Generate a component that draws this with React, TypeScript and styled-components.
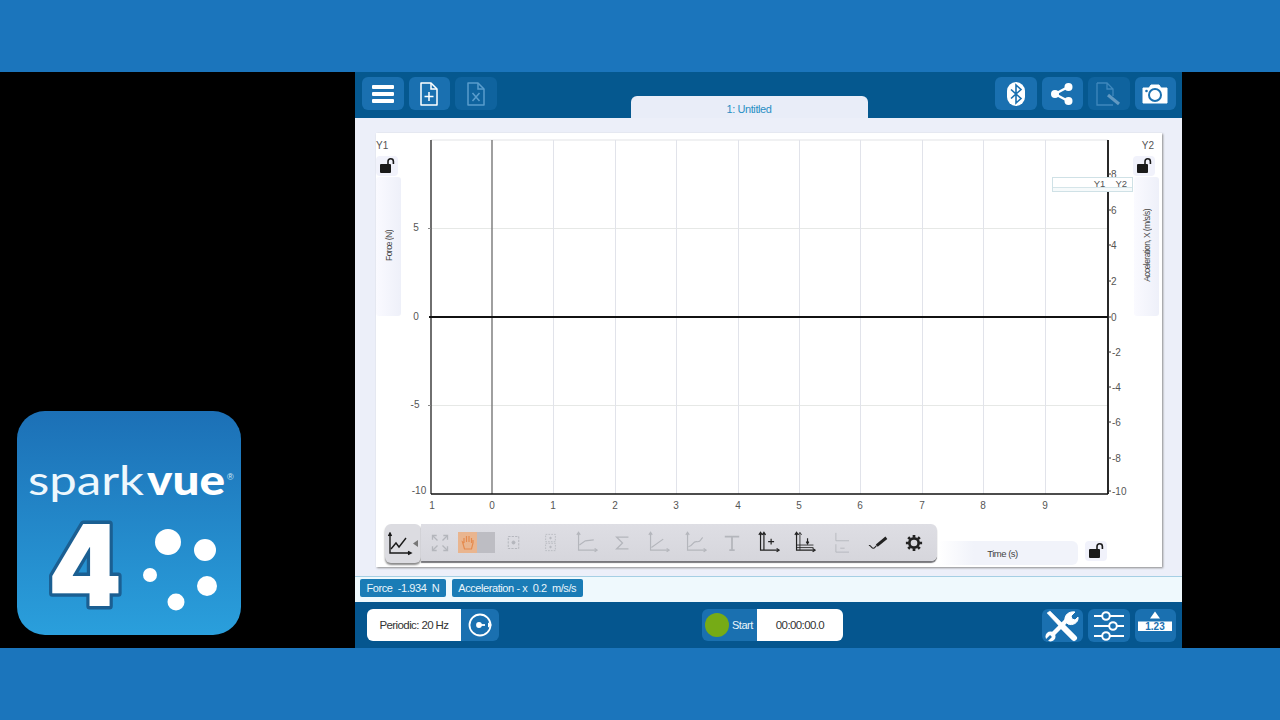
import React from 'react';
import styled, { createGlobalStyle } from 'styled-components';

const GlobalStyle = createGlobalStyle`
  html, body { margin: 0; padding: 0; background: #1b75bc; }
  body { font-family: "Liberation Sans", Arial, sans-serif; }
`;

const Page = styled.div`
  width: 1280px;
  height: 720px;
  display: flex;
  flex-direction: column;
  overflow: hidden;
`;

const Band = styled.div`
  height: 72px;
  background: #1b75bc;
`;

const Middle = styled.div`
  height: 576px;
  display: flex;
  background: #000;
`;

const LogoColumn = styled.div`
  width: 355px;
  display: flex;
  align-items: flex-end;
  padding: 0 0 13px 17px;
  box-sizing: border-box;
`;

const AppWindow = styled.div`
  width: 827px;
  display: flex;
  flex-direction: column;
  background: #eceff9;
`;

const TopBar = styled.div`
  height: 46px;
  flex: none;
  display: flex;
  align-items: flex-start;
  padding: 5px 6px 0 7px;
  box-sizing: border-box;
  background: #05588f;
`;

const ButtonGroup = styled.div<{ $right?: boolean }>`
  display: flex;
  gap: 5px;
  margin-left: ${(p) => (p.$right ? 'auto' : '0')};
`;

const IconButton = styled.div<{ $disabled?: boolean }>`
  width: 41.5px;
  height: 33px;
  display: flex;
  align-items: center;
  justify-content: center;
  border-radius: 6px;
  background: ${(p) => (p.$disabled ? '#0f639e' : '#1a70b0')};
`;

const Tab = styled.div`
  align-self: flex-end;
  width: 237px;
  height: 22px;
  margin-left: 134px;
  padding-top: 4px;
  box-sizing: border-box;
  display: flex;
  align-items: center;
  justify-content: center;
  border-radius: 6px 6px 0 0;
  background: #e9edf8;
  color: #2a8fc4;
  font-size: 11px;
  letter-spacing: -0.4px;
`;

const Workspace = styled.div`
  flex: 1;
  padding: 15px 20px 9px 21px;
  min-height: 0;
`;

const GraphCard = styled.div`
  position: relative;
  height: 434px;
  display: grid;
  grid-template-columns: 28px 730px 28px;
  grid-template-rows: 388px 46px;
  background: #fff;
  box-shadow: 1px 1px 2px #8c8c8c;
`;

const Rail = styled.div<{ $right?: boolean }>`
  display: flex;
  flex-direction: column;
  align-items: ${(p) => (p.$right ? 'flex-end' : 'flex-start')};
  padding: 7px ${(p) => (p.$right ? '7px' : '0')} 0 0;
  color: #555;
  font-size: 10px;
`;

const RailTitle = styled.div<{ $right?: boolean }>`
  height: 12px;
  line-height: 12px;
  margin-right: ${(p) => (p.$right ? '1px' : '0')};
  margin-bottom: 4px;
`;

const LockBox = styled.div`
  width: 22px;
  height: 20px;
  display: flex;
  align-items: center;
  justify-content: center;
  border-radius: 4px;
  background: #f1f2fb;
`;

const AxisPanel = styled.div<{ $right?: boolean }>`
  width: 25px;
  height: 139px;
  margin-top: 1px;
  margin-right: ${(p) => (p.$right ? '-4px' : '0')};
  display: flex;
  align-items: center;
  justify-content: center;
  border-radius: 3px;
  background: linear-gradient(90deg, #fafaff, #eef0f9);
`;

const VerticalText = styled.span`
  writing-mode: vertical-rl;
  transform: rotate(180deg);
  margin-bottom: 2px;
  font-size: 8.5px;
  letter-spacing: -0.55px;
  color: #444;
  white-space: nowrap;
`;

const PlotSvg = styled.svg`
  display: block;
  width: 730px;
  height: 388px;
  font-family: "Liberation Sans", Arial, sans-serif;
  font-size: 10px;
`;

const XAxisRow = styled.div`
  grid-column: 1 / -1;
  display: flex;
  align-items: flex-start;
  justify-content: flex-end;
  padding: 20px 55px 0 0;
  gap: 7px;
`;

const XAxisPanel = styled.div`
  width: 139px;
  height: 24px;
  display: flex;
  align-items: center;
  justify-content: center;
  padding-right: 12px;
  box-sizing: border-box;
  border-radius: 0 6px 6px 0;
  background: linear-gradient(90deg, #fff, #f1f3fa 25%);
  color: #444;
  font-size: 9.5px;
  letter-spacing: -0.5px;
`;

const LegendBox = styled.div`
  position: absolute;
  left: 676px;
  top: 44px;
  width: 81px;
  height: 15px;
  display: flex;
  justify-content: flex-end;
  gap: 10px;
  padding: 0 5px 3px 0;
  box-sizing: border-box;
  border: 1px solid #cfe1e6;
  background: #fff;
  box-shadow: inset 0 -3px 0 #f6fafb, inset 0 -4px 0 #d5e5e9;
  color: #555;
  font-size: 9.5px;
  line-height: 12px;
`;

const ToolbarWrap = styled.div`
  position: absolute;
  left: 9px;
  top: 391px;
  display: flex;
  align-items: flex-start;
`;

const ToolbarMode = styled.div`
  width: 36px;
  height: 39px;
  display: flex;
  align-items: center;
  justify-content: center;
  box-sizing: border-box;
  border-radius: 6px;
  background: #dcdce1;
  box-shadow: 0 2px 2px #8a8a8a;
`;

const ToolbarBar = styled.div`
  width: 516px;
  height: 37px;
  display: flex;
  align-items: center;
  padding-left: 1px;
  box-sizing: border-box;
  border-radius: 0 6px 6px 0;
  background: linear-gradient(180deg, #dedee4, #d6d6dc);
  box-shadow: 0 2px 1px #77777c;
`;

const ToolSlot = styled.div`
  width: 36.45px;
  height: 26px;
  flex: none;
  display: flex;
  align-items: center;
  justify-content: center;
`;

const HandPair = styled.div`
  width: 37px;
  height: 21px;
  flex: none;
  display: flex;
`;

const HandPart = styled.div<{ $on?: boolean }>`
  flex: 1;
  display: flex;
  align-items: center;
  justify-content: center;
  background: ${(p) => (p.$on ? '#e9b58f' : '#bdbdc3')};
`;

const MeterRow = styled.div`
  height: 26px;
  flex: none;
  display: flex;
  align-items: center;
  gap: 6px;
  padding: 0 0 3px 5px;
  box-sizing: border-box;
  border-top: 1px solid #a5cfe4;
  background: #eff9fd;
`;

const MeterChip = styled.div`
  height: 18px;
  display: flex;
  align-items: center;
  padding: 0 6.5px;
  border-radius: 2px;
  background: #1a7cb6;
  color: #e9f5fb;
  font-size: 11px;
  letter-spacing: -0.42px;
  white-space: pre;
`;

const BottomBar = styled.div`
  height: 46px;
  flex: none;
  display: flex;
  align-items: flex-start;
  padding: 7px 6px 0 12px;
  box-sizing: border-box;
  background: #05568f;
`;

const RateField = styled.div`
  width: 94px;
  height: 32px;
  display: flex;
  align-items: center;
  justify-content: center;
  border-radius: 6px 0 0 6px;
  background: #fff;
  color: #333;
  font-size: 11.5px;
  letter-spacing: -0.6px;
`;

const RateButton = styled.div`
  width: 38px;
  height: 32px;
  display: flex;
  align-items: center;
  justify-content: center;
  border-radius: 0 6px 6px 0;
  background: #1a70b0;
`;

const StartGroup = styled.div`
  margin-left: 203px;
  display: flex;
`;

const StartButton = styled.div`
  width: 55px;
  height: 32px;
  display: flex;
  align-items: center;
  gap: 3px;
  padding-left: 3px;
  box-sizing: border-box;
  border-radius: 6px 0 0 6px;
  background: #1a70b0;
  color: #eaf5fb;
  font-size: 11px;
  letter-spacing: -0.5px;
`;

const GreenDot = styled.div`
  width: 24px;
  height: 24px;
  border-radius: 50%;
  background: #76ab16;
`;

const Timer = styled.div`
  width: 86px;
  height: 32px;
  display: flex;
  align-items: center;
  justify-content: center;
  border-radius: 0 6px 6px 0;
  background: #fff;
  color: #333;
  font-size: 11.5px;
  letter-spacing: -0.6px;
`;

const SparkLogo = () => (
  <svg width="224" height="224" viewBox="17 411 224 224">
    <defs>
      <linearGradient id="logoFill" x1="0" y1="0" x2="0" y2="1">
        <stop offset="0" stopColor="#1c70b6" />
        <stop offset="1" stopColor="#2a9fdc" />
      </linearGradient>
    </defs>
    <rect x="17" y="411" width="224" height="224" rx="28" fill="url(#logoFill)" />
    <text x="28" y="495" fill="#eef8fd" fontFamily="Lato, sans-serif" fontWeight="400" fontSize="40" textLength="116" lengthAdjust="spacingAndGlyphs">spark</text>
    <text x="147" y="495" fill="#fff" fontFamily="Lato, sans-serif" fontWeight="900" fontSize="41" textLength="78" lengthAdjust="spacingAndGlyphs">vue</text>
    <text x="227" y="480" fill="#d5ecf8" fontFamily="Liberation Sans, sans-serif" fontSize="9">®</text>
    <text x="48" y="606" fill="#fff" stroke="#1b5f92" strokeWidth="7" strokeLinejoin="round" paintOrder="stroke" fontFamily="Inter, sans-serif" fontWeight="900" fontSize="113" textLength="74" lengthAdjust="spacingAndGlyphs">4</text>
    <circle cx="168" cy="542" r="13" fill="#fff" />
    <circle cx="205" cy="550" r="11" fill="#fff" />
    <circle cx="150" cy="575" r="7" fill="#fff" />
    <circle cx="207" cy="586" r="10" fill="#fff" />
    <circle cx="176" cy="602" r="8.5" fill="#fff" />
  </svg>
);

const MenuIcon = () => (
  <svg width="24" height="20" viewBox="0 0 24 20" fill="#fff">
    <rect x="1" y="1" width="22" height="4" rx="1" />
    <rect x="1" y="8" width="22" height="4" rx="1" />
    <rect x="1" y="15" width="22" height="4" rx="1" />
  </svg>
);

const FileIcon = ({ color, children }: { color: string; children: React.ReactNode }) => (
  <svg width="20" height="26" viewBox="0 0 20 26" fill="none" stroke={color} strokeWidth="1.5">
    <path d="M2 2h10l6 6v16H2z" strokeLinejoin="round" />
    <path d="M12 2v6h6" />
    {children}
  </svg>
);

const BluetoothIcon = () => (
  <svg width="20" height="26" viewBox="0 0 20 26">
    <rect x="1" y="1" width="18" height="24" rx="9" fill="#fff" />
    <path d="M5 8.5l10 9-5 4.5V4l5 4.5-10 9" fill="none" stroke="#1a70b0" strokeWidth="1.6" />
  </svg>
);

const ShareIcon = () => (
  <svg width="24" height="24" viewBox="0 0 24 24" fill="#fff">
    <path d="M18 5L5 12l13 7" fill="none" stroke="#fff" strokeWidth="2.4" />
    <circle cx="18.5" cy="5" r="4" />
    <circle cx="5" cy="12" r="4" />
    <circle cx="18.5" cy="19" r="4" />
  </svg>
);

const DocPenIcon = () => (
  <svg width="28" height="26" viewBox="0 0 28 26" fill="none">
    <path d="M2 2h10l6 6v7M18 24H2V2M12 2v6h6" stroke="#3f88bd" strokeWidth="1.3" />
    <path d="M13 14l11 9" stroke="#6199c2" strokeWidth="3.2" />
  </svg>
);

const CameraIcon = () => (
  <svg width="26" height="22" viewBox="0 0 26 22">
    <path d="M1 5h6l2-3h8l2 3h6v15H1z" fill="#fff" stroke="#fff" strokeLinejoin="round" />
    <circle cx="13" cy="12" r="6" fill="none" stroke="#1a70b0" strokeWidth="2" />
    <circle cx="4.5" cy="8" r="1.3" fill="#1a70b0" />
  </svg>
);

const ToolsIcon = () => (
  <svg width="34" height="32" viewBox="0 0 34 32" fill="none" stroke="#fff">
    <path d="M2 3l3-2 13 13-3 3z" fill="#fff" strokeWidth="0.5" />
    <path d="M17 16l12 12" strokeWidth="6" strokeLinecap="round" />
    <path d="M6 26L23 9" strokeWidth="4.5" />
    <path d="M20 11c-1-6 4-10 10-9l-4 4 1 3 3 1 3-3c1 6-6 9-10 7z" fill="#fff" strokeWidth="1" />
    <circle cx="5.5" cy="26.5" r="5" fill="#fff" strokeWidth="0" />
    <path d="M1 31l5-5" stroke="#1a70b0" strokeWidth="2.6" />
  </svg>
);

const SlidersIcon = () => (
  <svg width="32" height="30" viewBox="0 0 32 30" fill="none" stroke="#fff" strokeWidth="2">
    <path d="M1 5h30M1 15h30M1 25h30" />
    <circle cx="13" cy="5" r="3.8" fill="#1a70b0" />
    <circle cx="20" cy="15" r="3.8" fill="#1a70b0" />
    <circle cx="13" cy="25" r="3.8" fill="#1a70b0" />
  </svg>
);

const DigitsIcon = () => (
  <svg width="36" height="30" viewBox="0 0 36 30">
    <path d="M18 0.5l5 7H13z" fill="#fff" />
    <rect x="1" y="10.5" width="34" height="9.5" fill="#fff" />
    <text x="18" y="19" textAnchor="middle" fontSize="10" fontWeight="700" fill="#1a70b0" fontFamily="Liberation Sans, sans-serif">1.23</text>
  </svg>
);

const RateIcon = () => (
  <svg width="26" height="26" viewBox="0 0 26 26" fill="none" stroke="#fff" strokeWidth="1.8">
    <circle cx="13" cy="13" r="10.5" />
    <circle cx="12" cy="13" r="2" fill="#fff" />
    <path d="M12 13h6" />
    <path d="M21 10.5l4 2.5-4 2.5z" fill="#fff" strokeWidth="0" />
  </svg>
);

const LockIcon = () => (
  <svg width="17" height="16" viewBox="0 0 17 16">
    <rect x="1" y="6" width="11" height="9" rx="1" fill="#1a1a1a" />
    <path d="M9 6V3.5a2.7 2.7 0 0 1 5.4 0V6" fill="none" stroke="#1a1a1a" strokeWidth="1.6" />
  </svg>
);

const GraphAxes = ({ color, children }: { color: string; children?: React.ReactNode }) => (
  <svg width="22" height="23" viewBox="0 0 26 26" fill="none" stroke={color} strokeWidth="1.4">
    <path d="M3 2v20h21" />
    <path d="M1 4l2-3 2 3M22 20l3 2-3 2" />
    {children}
  </svg>
);

const tool = (c: string) => ({
  expand: (
    <svg width="20" height="20" viewBox="0 0 24 24" fill="none" stroke={c} strokeWidth="1.6">
      <path d="M3 3l6 6M21 3l-6 6M3 21l6-6M21 21l-6-6" />
      <path d="M3 8V3h5M21 8V3h-5M3 16v5h5M21 16v5h-5" />
    </svg>
  ),
  target: (
    <svg width="15" height="15" viewBox="0 0 20 20" fill="none" stroke={c} strokeWidth="1.3">
      <path d="M3 2h14v16H3z" strokeDasharray="3 1.6" />
      <circle cx="10" cy="10" r="2" fill={c} />
    </svg>
  ),
  stack: (
    <svg width="13" height="21" viewBox="0 0 16 24" fill="none" stroke={c} strokeWidth="1">
      <rect x="2" y="2" width="12" height="9" strokeDasharray="2 1.5" />
      <rect x="2" y="13" width="12" height="9" strokeDasharray="2 1.5" />
      <circle cx="8" cy="6.5" r="1" fill={c} />
      <circle cx="8" cy="17.5" r="1" fill={c} />
    </svg>
  ),
  sigma: (
    <svg width="17" height="18" viewBox="0 0 20 20" fill="none" stroke={c} strokeWidth="1.5">
      <path d="M17 3H3l7 7-7 7h14" />
    </svg>
  ),
  gear: (
    <svg width="18" height="18" viewBox="0 0 20 20" fill="none" stroke={c}>
      <circle cx="10" cy="10" r="5.2" strokeWidth="3" />
      <path d="M10 1v3M10 16v3M1 10h3M16 10h3M3.6 3.6l2.1 2.1M14.3 14.3l2.1 2.1M16.4 3.6l-2.1 2.1M5.7 14.3l-2.1 2.1" strokeWidth="3" />
    </svg>
  ),
  pen: (
    <svg width="21" height="16" viewBox="0 0 24 18" fill="none" stroke={c}>
      <path d="M1 12c2-1 3 3 5 3s2-2 4-3" strokeWidth="1.2" />
      <path d="M10 12L21 3" strokeWidth="3.4" />
    </svg>
  ),
});

const on = tool('#222');
const off = tool('#b4b6bc');
const dim = '#b4b6bc';

const ModeIcon = () => (
  <svg width="32" height="24" viewBox="0 0 32 24" fill="none" stroke="#1a1a1a" strokeWidth="1.4">
    <path d="M3 2v19h20" />
    <path d="M1.5 4L3 1l1.5 3M21 19.5l3 1.5-3 1.5" fill="#1a1a1a" />
    <path d="M4 17l5-6 3 4 7-9" />
    <path d="M31 8v7l-5-3.5z" fill="#777" stroke="none" />
  </svg>
);

const xTicks = [
  { x: 553, t: '1' }, { x: 615, t: '2' }, { x: 676, t: '3' }, { x: 738, t: '4' },
  { x: 799, t: '5' }, { x: 860, t: '6' }, { x: 922, t: '7' }, { x: 983, t: '8' }, { x: 1045, t: '9' },
];
const leftTicks = [
  { y: 228, t: '5', x: 416 }, { y: 317, t: '0', x: 416 }, { y: 405, t: '-5', x: 415 }, { y: 491, t: '-10', x: 419 },
];
const rightTicks = [
  { y: 174, t: '8' }, { y: 210, t: '6' }, { y: 245, t: '4' }, { y: 281, t: '2' }, { y: 317, t: '0' },
  { y: 352, t: '-2' }, { y: 387, t: '-4' }, { y: 422, t: '-6' }, { y: 458, t: '-8' }, { y: 491, t: '-10' },
];

const Plot = () => (
  <PlotSvg viewBox="404 133 730 388">
    <path d="M431 140H1108" stroke="#e2e3e6" />
    <path d="M431 228.5H1108M431 405.5H1108" stroke="#e6e8e6" />
    {xTicks.map((k) => (
      <path key={k.t} d={`M${k.x + 0.5} 140V494`} stroke="#e1e3ea" />
    ))}
    <path d="M492 140V494" stroke="#777" strokeWidth="1.4" />
    <path d="M431 140V494" stroke="#333" strokeWidth="1.4" />
    <path d="M431 494H1108" stroke="#111" strokeWidth="1.4" />
    <path d="M1108 140V494" stroke="#111" strokeWidth="1.8" />
    <path d="M429 317H1108" stroke="#111" strokeWidth="2" />
    <path d="M428 228.5h3M428 405.5h3" stroke="#888" />
    {xTicks.map((k) => (
      <text key={k.t} x={k.x} y="509" textAnchor="middle" fill="#555">{k.t}</text>
    ))}
    <text x="432" y="509" textAnchor="middle" fill="#555">1</text>
    <text x="492" y="509" textAnchor="middle" fill="#555">0</text>
    {leftTicks.map((k) => (
      <text key={k.t} x={k.x} y={k.y + 3} textAnchor="middle" fill="#555">{k.t}</text>
    ))}
    {rightTicks.map((k) => (
      <g key={k.t}>
        <path d={`M1108 ${k.y}h3`} stroke="#333" />
        <text x={k.t.length > 1 ? 1112 : 1111} y={k.y + 3.5} fill="#555">{k.t}</text>
      </g>
    ))}
  </PlotSvg>
);

const App: React.FC = () => {
  return (
    <Page>
      <GlobalStyle />
      <Band />
      <Middle>
        <LogoColumn>
          <SparkLogo />
        </LogoColumn>
        <AppWindow>
          <TopBar>
            <ButtonGroup>
              <IconButton><MenuIcon /></IconButton>
              <IconButton>
                <FileIcon color="#fff"><path d="M10 11v9M5.5 15.5h9" /></FileIcon>
              </IconButton>
              <IconButton $disabled>
                <FileIcon color="#5a9dcd"><path d="M6.5 12l7 8M13.5 12l-7 8" /></FileIcon>
              </IconButton>
            </ButtonGroup>
            <Tab>1: Untitled</Tab>
            <ButtonGroup $right>
              <IconButton><BluetoothIcon /></IconButton>
              <IconButton><ShareIcon /></IconButton>
              <IconButton $disabled><DocPenIcon /></IconButton>
              <IconButton><CameraIcon /></IconButton>
            </ButtonGroup>
          </TopBar>
          <Workspace>
            <GraphCard>
              <Rail>
                <RailTitle>Y1</RailTitle>
                <LockBox><LockIcon /></LockBox>
                <AxisPanel><VerticalText>Force (N)</VerticalText></AxisPanel>
              </Rail>
              <Plot />
              <Rail $right>
                <RailTitle $right>Y2</RailTitle>
                <LockBox><LockIcon /></LockBox>
                <AxisPanel $right><VerticalText>Acceleration, X (m/s/s)</VerticalText></AxisPanel>
              </Rail>
              <XAxisRow>
                <XAxisPanel>Time (s)</XAxisPanel>
                <LockBox><LockIcon /></LockBox>
              </XAxisRow>
              <LegendBox><span>Y1</span><span>Y2</span></LegendBox>
              <ToolbarWrap>
                <ToolbarMode><ModeIcon /></ToolbarMode>
                <ToolbarBar>
                  <ToolSlot>{off.expand}</ToolSlot>
                  <HandPair>
                    <HandPart $on>
                      <svg width="14" height="17" viewBox="0 0 14 17" fill="none" stroke="#e58a4e" strokeWidth="1.2">
                        <path d="M3 9V4M5.5 8V2M8 8V2M10.5 9V4M3 9L1.5 8l2 7h7l1.5-6V6" />
                      </svg>
                    </HandPart>
                    <HandPart />
                  </HandPair>
                  <ToolSlot>{off.target}</ToolSlot>
                  <ToolSlot>{off.stack}</ToolSlot>
                  <ToolSlot><GraphAxes color={dim}><path d="M4 16l7-5 10-1" /></GraphAxes></ToolSlot>
                  <ToolSlot>{off.sigma}</ToolSlot>
                  <ToolSlot><GraphAxes color={dim}><path d="M4 19L18 9" /></GraphAxes></ToolSlot>
                  <ToolSlot><GraphAxes color={dim}><path d="M4 18c6-1 5-7 10-6s4-3 7-5" /></GraphAxes></ToolSlot>
                  <ToolSlot>
                    <svg width="18" height="18" viewBox="0 0 20 20" fill="none" stroke={dim}>
                      <path d="M2 3h16M10 3v15M7 18h6" strokeWidth="2" />
                    </svg>
                  </ToolSlot>
                  <ToolSlot>
                    <GraphAxes color="#222">
                      <path d="M7 2v20M5 4l2-3 2 3" />
                      <path d="M12 12h7M15.5 8.5v7" />
                    </GraphAxes>
                  </ToolSlot>
                  <ToolSlot>
                    <GraphAxes color="#222">
                      <path d="M7 2v20M5 4l2-3 2 3M3 16h20M3 19h20" strokeWidth="1" />
                      <path d="M16 8v6M14.5 12l1.5 2.5 1.5-2.5" />
                    </GraphAxes>
                  </ToolSlot>
                  <ToolSlot>
                    <svg width="16" height="21" viewBox="0 0 18 24" fill="none" stroke={dim}>
                      <path d="M2 1v9h15M2 14v9h15M7 18.5h5" />
                    </svg>
                  </ToolSlot>
                  <ToolSlot>{on.pen}</ToolSlot>
                  <ToolSlot>{on.gear}</ToolSlot>
                </ToolbarBar>
              </ToolbarWrap>
            </GraphCard>
          </Workspace>
          <MeterRow>
            <MeterChip>Force  -1.934  N</MeterChip>
            <MeterChip>Acceleration - x  0.2  m/s/s</MeterChip>
          </MeterRow>
          <BottomBar>
            <RateField>Periodic: 20 Hz</RateField>
            <RateButton><RateIcon /></RateButton>
            <StartGroup>
              <StartButton><GreenDot />Start</StartButton>
              <Timer>00:00:00.0</Timer>
            </StartGroup>
            <ButtonGroup $right>
              <IconButton><ToolsIcon /></IconButton>
              <IconButton><SlidersIcon /></IconButton>
              <IconButton><DigitsIcon /></IconButton>
            </ButtonGroup>
          </BottomBar>
        </AppWindow>
      </Middle>
      <Band />
    </Page>
  );
};

export default App;
